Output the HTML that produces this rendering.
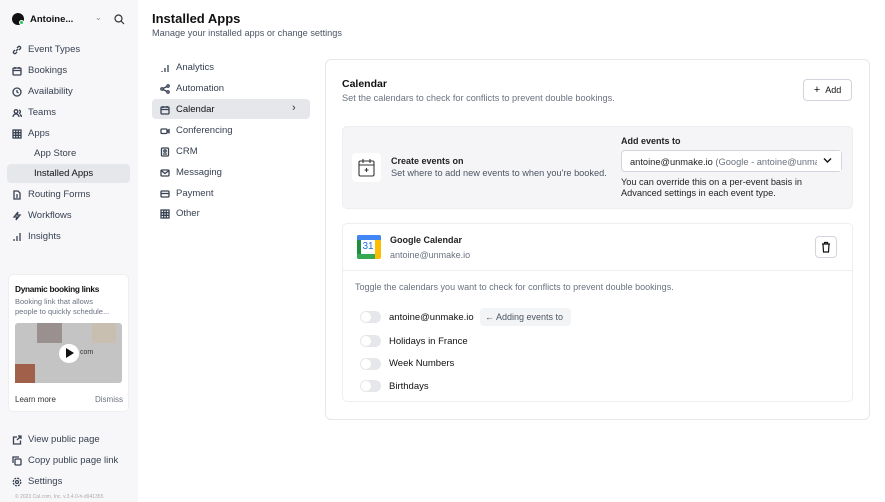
<!DOCTYPE html>
<html><head><meta charset="utf-8"><style>
*{box-sizing:border-box;margin:0;padding:0}
body{width:885px;height:502px;overflow:hidden;font-family:"Liberation Sans",sans-serif;color:#111;background:#fff;position:relative;font-size:9px}
.a{position:absolute}
.sb{left:0;top:0;width:138px;height:502px;background:#f7f7f9}
.ni{position:absolute;left:12px;font-size:9.5px;color:#374151;display:flex;align-items:center;gap:6px}
.ni svg{width:10px;height:10px;stroke:#374151;fill:none;stroke-width:1.3}
.si{position:absolute;left:160px;font-size:9.5px;color:#374151;display:flex;align-items:center;gap:6px}
.si svg{width:10px;height:10px;stroke:#374151;fill:none;stroke-width:1.3}
.tog{position:absolute;left:360px;width:21px;height:12px;border-radius:6px;background:#e5e7eb}
.tog:after{content:"";position:absolute;left:1px;top:1px;width:10px;height:10px;border-radius:50%;background:#fff}
.tl{position:absolute;left:389px;font-size:9.5px;color:#111}
</style></head><body>
<div class="a sb"></div>
<div class="a" style="left:12px;top:13px;width:12px;height:12px;border-radius:50%;background:#111"></div>
<div class="a" style="left:19px;top:20px;width:5px;height:5px;border-radius:50%;background:#22c55e;border:1px solid #fff"></div>
<div class="a" style="left:30px;top:14px;font-size:9.5px;font-weight:bold">Antoine...</div>
<div class="a" style="left:95px;top:13px;font-size:8px;color:#888">⌄</div>
<svg class="a" style="left:114px;top:14px" width="11" height="11" viewBox="0 0 11 11" fill="none" stroke="#333" stroke-width="1.2"><circle cx="4.5" cy="4.5" r="3.5"/><path d="M7 7l3 3"/></svg>
<div class="ni" style="top:44px"><svg viewBox="0 0 10 10"><path d="M4 6l2-2M3 5L1.5 6.5a1.5 1.5 0 002 2L5 7M7 5l1.5-1.5a1.5 1.5 0 00-2-2L5 3"/></svg>Event Types</div>
<div class="ni" style="top:65px"><svg viewBox="0 0 10 10"><rect x="1" y="2" width="8" height="7" rx="1"/><path d="M1 4.5h8M3 1v2M7 1v2"/></svg>Bookings</div>
<div class="ni" style="top:86px"><svg viewBox="0 0 10 10"><circle cx="5" cy="5" r="4"/><path d="M5 3v2l1.5 1"/></svg>Availability</div>
<div class="ni" style="top:107px"><svg viewBox="0 0 10 10"><circle cx="4" cy="3.5" r="1.8"/><path d="M1 9a3 3 0 016 0M7 2a1.8 1.8 0 010 3.5M8 6.5A3 3 0 019.5 9"/></svg>Teams</div>
<div class="ni" style="top:128px"><svg viewBox="0 0 10 10"><rect x="1" y="1" width="8" height="8"/><path d="M1 3.7h8M1 6.3h8M3.7 1v8M6.3 1v8"/></svg>Apps</div>
<div class="a" style="left:34px;top:148px;font-size:9.5px;color:#374151">App Store</div>
<div class="a" style="left:7px;top:164px;width:123px;height:19px;background:#e5e7eb;border-radius:4px"></div>
<div class="a" style="left:34px;top:168px;font-size:9.5px;color:#111">Installed Apps</div>
<div class="ni" style="top:189px"><svg viewBox="0 0 10 10"><path d="M2 1h4l2 2v6H2z M4 5h2M4 7h2"/></svg>Routing Forms</div>
<div class="ni" style="top:210px"><svg viewBox="0 0 10 10"><path d="M6 1L2 6h3l-1 3 4-5H5z"/></svg>Workflows</div>
<div class="ni" style="top:231px"><svg viewBox="0 0 10 10"><path d="M2 9V7M5 9V4M8 9V1"/></svg>Insights</div>
<div class="a" style="left:8px;top:274px;width:121px;height:138px;background:#fff;border:1px solid #eee;border-radius:5px"></div>
<div class="a" style="left:15px;top:284px;font-size:8.3px;font-weight:bold;letter-spacing:-.3px">Dynamic booking links</div>
<div class="a" style="left:15px;top:297px;font-size:7.5px;color:#6b7280;line-height:10px">Booking link that allows<br>people to quickly schedule...</div>
<div class="a" style="left:15px;top:323px;width:107px;height:60px;background:#c4c4c4;border-radius:3px"></div>
<div class="a" style="left:37px;top:323px;width:25px;height:20px;background:#9a9090"></div>
<div class="a" style="left:15px;top:364px;width:20px;height:19px;background:#a0604a"></div>
<div class="a" style="left:92px;top:323px;width:24px;height:20px;background:#c8bfb0"></div>
<div class="a" style="left:59px;top:344px;width:20px;height:19px;background:#fff;border-radius:50%"></div>
<div class="a" style="left:66px;top:348px;width:0;height:0;border-left:8px solid #111;border-top:5px solid transparent;border-bottom:5px solid transparent"></div>
<div class="a" style="left:80px;top:349px;font-size:7px;color:#333">com</div>
<div class="a" style="left:15px;top:395px;font-size:8px;color:#333">Learn more</div>
<div class="a" style="left:95px;top:395px;font-size:8px;color:#6b7280">Dismiss</div>
<div class="ni" style="top:434px"><svg viewBox="0 0 10 10"><path d="M5 2H1.5v7h7V5.5M6 1h3v3M9 1L5 5"/></svg>View public page</div>
<div class="ni" style="top:455px"><svg viewBox="0 0 10 10"><rect x="3" y="3" width="6" height="6" rx="1"/><path d="M1 7V1h6"/></svg>Copy public page link</div>
<div class="ni" style="top:476px"><svg viewBox="0 0 10 10"><circle cx="5" cy="5" r="1.5"/><circle cx="5" cy="5" r="3.8" stroke-dasharray="2 1"/></svg>Settings</div>
<div class="a" style="left:15px;top:494px;font-size:5px;color:#aaa">© 2023 Cal.com, Inc. v.3.4.0-h-d941355</div>

<div class="a" style="left:152px;top:11px;font-size:13px;font-weight:bold">Installed Apps</div>
<div class="a" style="left:152px;top:28px;font-size:9.2px;color:#4b5563">Manage your installed apps or change settings</div>

<div class="si" style="top:62px"><svg viewBox="0 0 10 10"><path d="M2 9V8M5 9V5M8 9V2"/></svg>Analytics</div>
<div class="si" style="top:83px"><svg viewBox="0 0 10 10"><circle cx="2" cy="5" r="1.2"/><circle cx="8" cy="2" r="1.2"/><circle cx="8" cy="8" r="1.2"/><path d="M3 4.5l4-2M3 5.5l4 2"/></svg>Automation</div>
<div class="a" style="left:152px;top:99px;width:158px;height:20px;background:#e5e7eb;border-radius:4px"></div>
<div class="si" style="top:104px;color:#111"><svg viewBox="0 0 10 10"><rect x="1" y="2" width="8" height="7" rx="1"/><path d="M1 4.5h8M3 1v2M7 1v2"/></svg>Calendar</div>
<div class="a" style="left:292px;top:102px;font-size:11px;color:#333">›</div>
<div class="si" style="top:125px"><svg viewBox="0 0 10 10"><rect x="1" y="3" width="6" height="4.5" rx="1"/><path d="M7 5l2-1.3v3L7 5.5"/></svg>Conferencing</div>
<div class="si" style="top:146px"><svg viewBox="0 0 10 10"><rect x="1.5" y="1" width="7" height="8" rx="1"/><circle cx="5" cy="4" r="1.2"/><path d="M3 7h4"/></svg>CRM</div>
<div class="si" style="top:167px"><svg viewBox="0 0 10 10"><rect x="1" y="2" width="8" height="6" rx="1"/><path d="M1 2.5l4 3 4-3"/></svg>Messaging</div>
<div class="si" style="top:188px"><svg viewBox="0 0 10 10"><rect x="1" y="2" width="8" height="6" rx="1"/><path d="M1 4.5h8"/></svg>Payment</div>
<div class="si" style="top:208px"><svg viewBox="0 0 10 10"><rect x="1" y="1" width="8" height="8"/><path d="M1 3.7h8M1 6.3h8M3.7 1v8M6.3 1v8"/></svg>Other</div>

<div class="a" style="left:325px;top:59px;width:545px;height:361px;border:1px solid #e5e7eb;border-radius:6px"></div>
<div class="a" style="left:342px;top:78px;font-size:10.5px;font-weight:bold">Calendar</div>
<div class="a" style="left:342px;top:93px;font-size:9.2px;color:#6b7280">Set the calendars to check for conflicts to prevent double bookings.</div>
<div class="a" style="left:803px;top:79px;width:49px;height:22px;border:1px solid #d1d5db;border-radius:4px;font-size:9px;display:flex;align-items:center;justify-content:center;gap:5px"><span style="font-size:11px">+</span>Add</div>

<div class="a" style="left:342px;top:126px;width:511px;height:83px;background:#f5f5f8;border:1px solid #eceef1;border-radius:5px"></div>
<div class="a" style="left:352px;top:153px;width:29px;height:29px;background:#fff;border-radius:4px"></div>
<svg class="a" style="left:358px;top:158px" width="17" height="19" viewBox="0 0 17 19" fill="none" stroke="#333" stroke-width="1.1"><rect x="1" y="3" width="15" height="15" rx="1.5"/><path d="M1 7h15M5 1v4M12 1v4M8.5 10v4M6.5 12h4"/></svg>
<div class="a" style="left:391px;top:156px;font-size:9px;font-weight:bold;color:#222">Create events on</div>
<div class="a" style="left:391px;top:168px;font-size:9.2px;color:#4b5563">Set where to add new events to when you're booked.</div>
<div class="a" style="left:621px;top:136px;font-size:9px;font-weight:bold;color:#222">Add events to</div>
<div class="a" style="left:621px;top:150px;width:221px;height:22px;background:#fff;border:1px solid #d1d5db;border-radius:4px;overflow:hidden;white-space:nowrap;font-size:9.3px;padding:6px 0 0 8px;color:#222">antoine@unmake.io <span style="color:#6b7280">(Google - antoine@unmake.io)</span></div>
<div class="a" style="left:817px;top:151px;width:24px;height:20px;background:#fff"></div>
<svg class="a" style="left:823px;top:157px" width="9" height="7" viewBox="0 0 9 7" fill="none" stroke="#111" stroke-width="1.4"><path d="M1 1.5l3.5 3.5 3.5-3.5"/></svg>
<div class="a" style="left:621px;top:177px;font-size:9.2px;color:#222;line-height:11px">You can override this on a per-event basis in<br>Advanced settings in each event type.</div>

<div class="a" style="left:342px;top:223px;width:511px;height:179px;border:1px solid #eceef1;border-radius:5px"></div>
<div class="a" style="left:343px;top:270px;width:509px;height:1px;background:#eceef1"></div>
<div class="a" style="left:357px;top:235px;width:24px;height:24px;border-radius:2px;background:linear-gradient(to right,#1e8e3e 0 25%,#1967d2 25% 75%,#fbbc04 75%);overflow:hidden">
<div class="a" style="left:0;top:0;width:24px;height:5px;background:#4285f4"></div>
<div class="a" style="left:4px;top:5px;width:14px;height:14px;background:#fff;color:#1a73e8;font-size:10px;text-align:center;line-height:14px">31</div>
<div class="a" style="left:0;top:19px;width:18px;height:5px;background:#34a853"></div></div>
<div class="a" style="left:390px;top:235px;font-size:9px;font-weight:bold;color:#222">Google Calendar</div>
<div class="a" style="left:390px;top:250px;font-size:9px;color:#6b7280">antoine@unmake.io</div>
<div class="a" style="left:815px;top:236px;width:22px;height:22px;border:1px solid #d1d5db;border-radius:4px"></div>
<svg class="a" style="left:821px;top:241px" width="10" height="12" viewBox="0 0 10 12" fill="none" stroke="#111" stroke-width="1.2"><path d="M1 3h8M3.5 3V1.5h3V3M2 3l.5 8h5L8 3"/></svg>
<div class="a" style="left:355px;top:282px;font-size:9px;color:#6b7280">Toggle the calendars you want to check for conflicts to prevent double bookings.</div>
<div class="tog" style="top:311px"></div><div class="tl" style="top:312px">antoine@unmake.io</div>
<div class="a" style="left:480px;top:308px;width:91px;height:18px;background:#f3f4f6;border-radius:4px;font-size:9px;color:#4b5563;padding:4px 0 0 5px">← Adding events to</div>
<div class="tog" style="top:335px"></div><div class="tl" style="top:336px">Holidays in France</div>
<div class="tog" style="top:358px"></div><div class="tl" style="top:358px">Week Numbers</div>
<div class="tog" style="top:380px"></div><div class="tl" style="top:381px">Birthdays</div>
</body></html>
